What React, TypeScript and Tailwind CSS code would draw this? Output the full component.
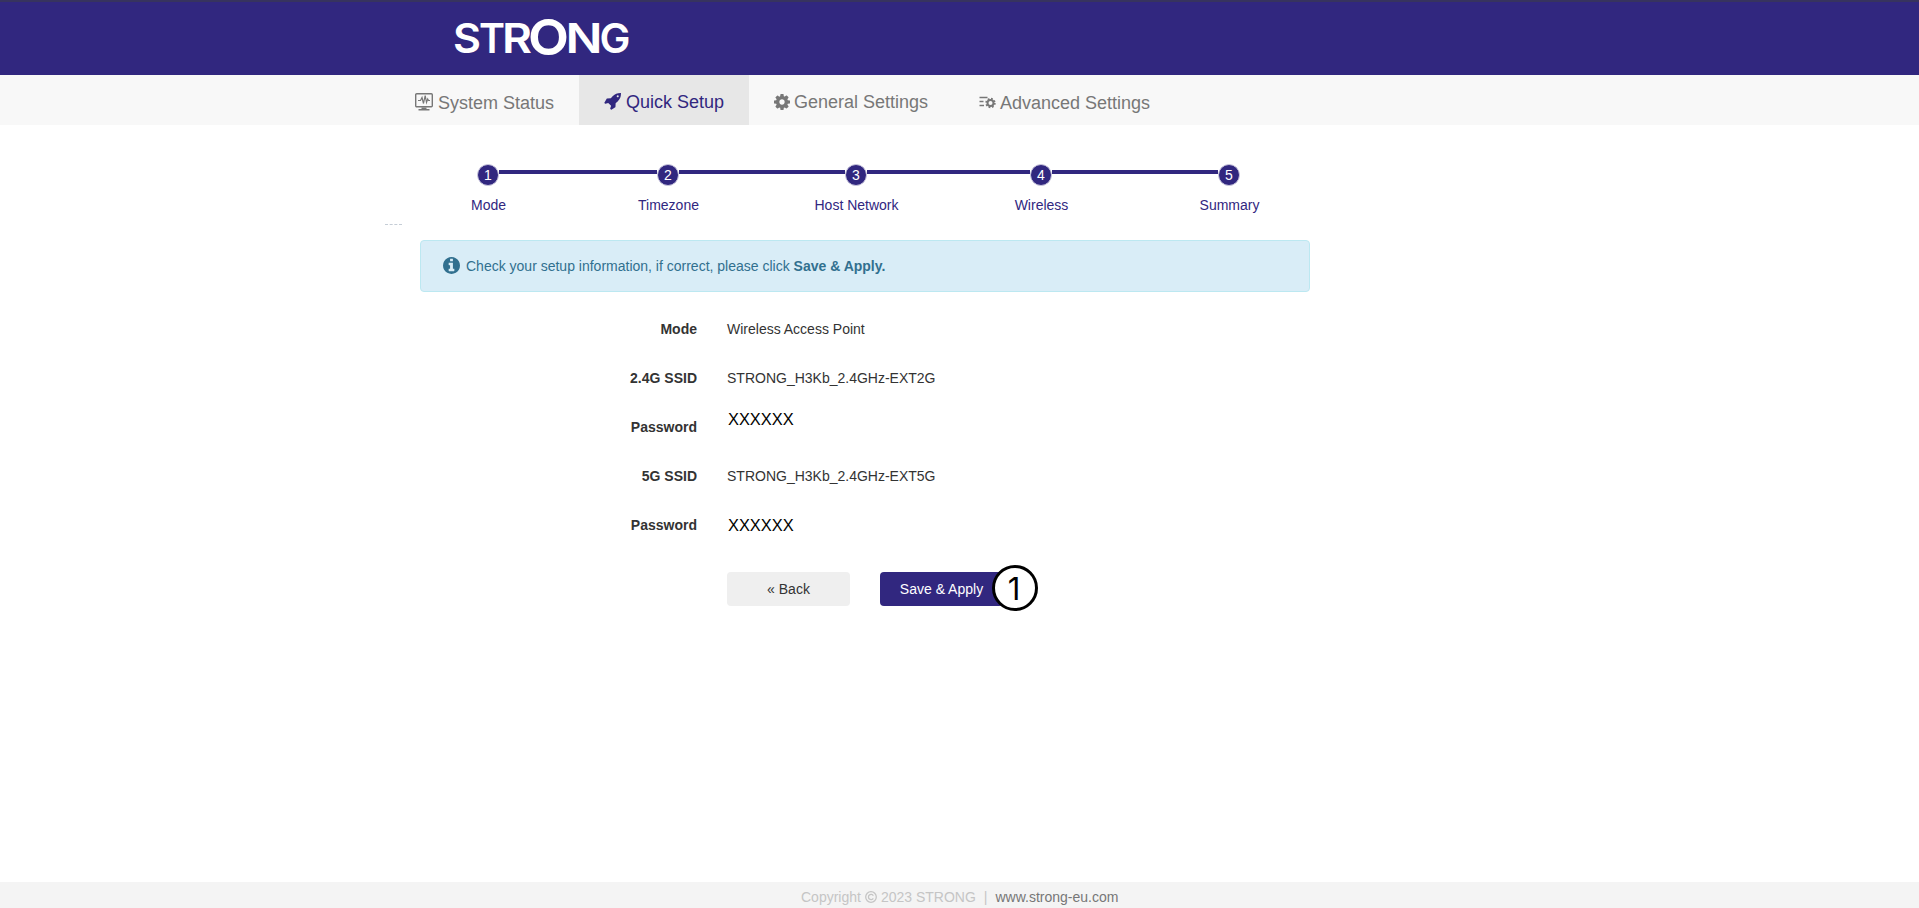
import clsx from "clsx";

const steps = [
  { label: "Mode", width: "w-[180px]" },
  { label: "Timezone", width: "w-[180px]" },
  { label: "Host Network", width: "w-[196px]" },
  { label: "Wireless", width: "w-[174px]" },
  { label: "Summary", width: "w-[202px]" },
];

const summary = [
  { label: "Mode", value: "Wireless Access Point" },
  { label: "2.4G SSID", value: "STRONG_H3Kb_2.4GHz-EXT2G" },
  { label: "Password", value: "XXXXXX", masked: true, raised: true },
  { label: "5G SSID", value: "STRONG_H3Kb_2.4GHz-EXT5G" },
  { label: "Password", value: "XXXXXX", masked: true },
];

// letters are stretched one by one, the wordmark is wider than any stock font
const Logo = () => (
  <svg width="190" height="66" viewBox="-4 -14 190 66" className="fill-white font-['Inter']">
    <g fontSize="41" fontWeight="600">
      <text x="-1" y="35" textLength="28" lengthAdjust="spacingAndGlyphs">S</text>
      <text x="25" y="35" textLength="26" lengthAdjust="spacingAndGlyphs">T</text>
      <text x="48" y="35" textLength="30" lengthAdjust="spacingAndGlyphs">R</text>
      <text x="111.5" y="35" textLength="37" lengthAdjust="spacingAndGlyphs">N</text>
      <text x="145.5" y="35" textLength="31" lengthAdjust="spacingAndGlyphs">G</text>
    </g>
    <text
      x="75"
      y="37"
      fontFamily="Lato"
      fontSize="48.5"
      fontWeight="900"
      textLength="39"
      lengthAdjust="spacingAndGlyphs"
    >
      O
    </text>
  </svg>
);

const MonitorIcon = () => (
  <svg width="18" height="18" viewBox="0 0 18 18" fill="none" stroke="currentColor">
    <rect x="0.7" y="0.7" width="16.600" height="13" rx="1" strokeWidth="1.4" />
    <path d="M3 7.500h2.500l1.500-3 1.500 6 1.700-8 1.300 7 1.200-3.500 0.800 1.500h1.500" strokeWidth="1.2" />
    <path d="M6.500 15.200h5M3.500 16.700h11" strokeWidth="1.600" />
  </svg>
);

const RocketIcon = () => (
  <svg width="17" height="17" viewBox="0 0 1664 1664" fill="currentColor">
    <path d="M1440 320q0-40-28-68t-68-28-68 28-28 68 28 68 68 28 68-28 28-68zm224-288q0 249-75.500 430.500t-253.500 360.500q-81 80-195 176l-20 379q-2 16-16 26l-384 224q-7 4-16 4-12 0-23-9l-64-64q-13-14-8-32l85-276-281-281-276 85q-3 1-9 1-14 0-23-9l-64-64q-17-19-5-39l224-384q10-14 26-16l379-20q96-114 176-195 188-187 358-258t431-71q14 0 24 9.500t10 22.500z" />
  </svg>
);

const GearIcon = () => (
  <svg width="16" height="16" viewBox="0 0 1536 1536" fill="currentColor">
    <path d="M1024 768q0-106-75-181t-181-75-181 75-75 181 75 181 181 75 181-75 75-181zm512-109v222q0 12-8 23t-20 13l-185 28q-19 54-39 91 35 50 107 138 10 12 10 25t-9 23q-27 37-99 108t-94 71q-12 0-26-9l-138-108q-44 23-91 38-16 136-29 186-7 28-36 28H657q-14 0-24.500-8.500T621 1506l-28-184q-49-16-90-37l-141 107q-10 9-25 9-14 0-25-11-126-114-165-168-7-10-7-23 0-12 8-23 15-21 51-66.500t54-70.500q-27-50-41-99L29 913q-13-2-21-12.500T0 877V655q0-12 8-23t19-13l186-28q14-46 39-92-40-57-107-138-10-12-10-24 0-10 9-23 26-36 98.500-107.500T337 135q13 0 26 10l138 107q44-23 91-38 16-136 29-186 7-28 36-28h222q14 0 24.500 8.500T915 30l28 184q49 16 90 37l142-107q9-9 24-9 13 0 25 10 129 119 165 170 7 8 7 22 0 12-8 23-15 21-51 66.500t-54 70.500q26 50 41 98l183 28q13 2 21 12.500t8 23.500z" />
  </svg>
);

const AdvancedIcon = () => (
  <svg width="17" height="13" viewBox="0 0 17 13" fill="none" stroke="currentColor">
    <path d="M0.500 1.500h8M0.500 5.500h4M0.500 9.500h4.500" strokeWidth="1.500" />
    <circle cx="11.500" cy="7" r="3" strokeWidth="2" />
    <circle cx="11.500" cy="7" r="4.300" strokeWidth="1.800" strokeDasharray="1.690 1.690" />
  </svg>
);

const InfoIcon = () => (
  <svg width="17" height="17" viewBox="0 0 1536 1536" fill="currentColor">
    <path d="M1024 1248v-160q0-14-9-23t-23-9h-96V544q0-14-9-23t-23-9H544q-14 0-23 9t-9 23v160q0 14 9 23t23 9h96v320h-96q-14 0-23 9t-9 23v160q0 14 9 23t23 9h448q14 0 23-9t9-23zM896 352V192q0-14-9-23t-23-9H672q-14 0-23 9t-9 23v160q0 14 9 23t23 9h192q14 0 23-9t9-23zm640 416q0 209-103 385.500T1153.500 1433 768 1536t-385.500-103T103 1153.500 0 768t103-385.500T382.500 103 768 0t385.500 103T1433 382.500 1536 768z" />
  </svg>
);

const CopyrightIcon = () => (
  <svg width="12" height="12" viewBox="0 0 12 12" fill="none" stroke="currentColor" strokeWidth="1.300">
    <circle cx="6" cy="6" r="5.300" />
    <path d="M8.300 4.700A2.600 2.600 0 1 0 8.300 7.300" />
  </svg>
);

const Stepper = () => (
  <div className="ml-[398px] flex pt-[39px] text-[#31277f]">
    {steps.map((step, i) => (
      <div key={step.label} className={clsx("shrink-0", step.width)}>
        <div className="flex h-[22px] items-start">
          <div className={clsx("mt-1.5 h-1 flex-1", i > 0 && "bg-[#31277f]")} />
          <div className="flex size-[22px] items-center justify-center rounded-full border border-[#c9c6dd] bg-[#31277f] text-sm leading-none text-white">
            {i + 1}
          </div>
          <div className={clsx("mt-1.5 h-1 flex-1", i < steps.length - 1 && "bg-[#31277f]")} />
        </div>
        <p className="mt-[9px] pl-px text-center leading-5">{step.label}</p>
      </div>
    ))}
  </div>
);

const App = () => {
  return (
    <div className="flex h-screen flex-col overflow-hidden bg-white font-['Liberation_Sans',Arial,sans-serif] text-sm text-[#333]">
      <header className="h-[75px] shrink-0 border-t-2 border-[#37335f] bg-[#31277f] pt-[2px] pl-[450px]">
        <Logo />
      </header>

      <nav className="flex h-[50px] shrink-0 bg-[#f8f8f8] pl-[390px] text-lg leading-5 text-[#777]">
        <a className="flex w-[189px] items-center gap-[5px] pt-[5px] pl-[25px] whitespace-nowrap">
          <span className="-mt-0.5">
            <MonitorIcon />
          </span>
          System Status
        </a>
        <a className="flex w-[170px] items-center gap-[5px] bg-[#e7e7e7] pt-[3px] pl-[25px] whitespace-nowrap text-[#31277f]">
          <RocketIcon />
          Quick Setup
        </a>
        <a className="flex w-[205px] items-center gap-1 pt-[3px] pl-[25px] whitespace-nowrap">
          <GearIcon />
          General Settings
        </a>
        <a className="flex items-center gap-1 pt-[5px] pl-[25px] whitespace-nowrap">
          <AdvancedIcon />
          Advanced Settings
        </a>
      </nav>

      <main className="flex-1">
        <Stepper />
        <div className="mt-[9px] ml-[385px] w-[17px] border-t border-dashed border-[#c5cdd6]" />

        <div className="mt-[15px] ml-[420px] flex h-[52px] w-[890px] items-center rounded border border-[#bce8f1] bg-[#d9edf7] pl-[22px] text-[#31708f]">
          <span className="-mt-0.5">
            <InfoIcon />
          </span>
          <p className="ml-[6px]">
            Check your setup information, if correct, please click <b>Save &amp; Apply.</b>
          </p>
        </div>

        <dl className="mt-3">
          {summary.map((row, i) => (
            <div key={i} className="flex h-[49px] items-center">
              <dt className="w-[697px] text-right font-bold">{row.label}</dt>
              <dd
                className={clsx(
                  row.masked ? "ml-[31px] pt-0.5 text-[16.4px] text-black" : "ml-[30px]",
                  row.raised && "mb-4",
                )}
              >
                {row.value}
              </dd>
            </div>
          ))}
        </dl>

        <div className="mt-[23px] ml-[727px] flex gap-[30px]">
          <button className="h-[34px] w-[123px] rounded bg-[#efefef]">« Back</button>
          <div className="relative">
            <button className="h-[34px] w-[123px] rounded bg-[#31277f] text-white">Save &amp; Apply</button>
            <span className="absolute -top-[7px] left-[112px] flex size-[46px] items-center justify-center rounded-full border-[3px] border-black bg-white pr-0.5 font-['Inter'] text-[31px] leading-none text-black">
              1
            </span>
          </div>
        </div>
      </main>

      <footer className="flex h-[26px] shrink-0 items-center bg-[#f4f4f4] pt-1 pl-[801px] text-[#c5c5c5]">
        Copyright <span className="mx-1"><CopyrightIcon /></span> 2023 STRONG
        <span className="mx-2">|</span>
        <a className="text-[#777]">www.strong-eu.com</a>
      </footer>
    </div>
  );
};

export default App;
